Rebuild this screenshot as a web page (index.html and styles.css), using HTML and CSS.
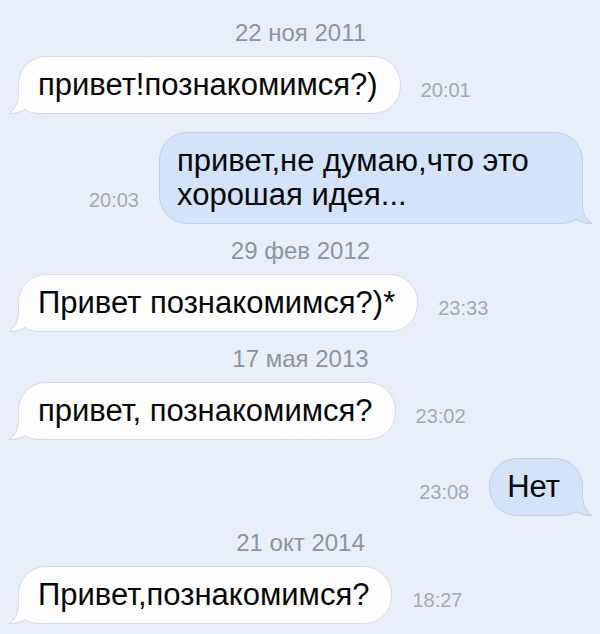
FILE: index.html
```html
<!DOCTYPE html>
<html lang="ru">
<head>
    <meta charset="UTF-8">
    <meta name="viewport" content="width=device-width, initial-scale=1.0">
    <title>Сообщения</title>
    <link rel="stylesheet" href="styles.css">
</head>
<body>
    <main class="chat">
        <div class="date">22 ноя 2011</div>
        <div class="row in">
            <div class="bubble">привет!познакомимся?)
                <svg class="tail" viewBox="0 0 42 30" width="42" height="30"><path class="tail-fill" d="M10 0 L10.5 10 C10.5 20 6 26 1 29.5 C7 30 13 28 17 25.5 C21 28.5 27 29.5 34 29.5 L42 29.5 L42 0 Z"/><path class="tail-line" d="M10.5 0 L10.5 10 C10.5 20 6 26 1 29.5 C7 30 13 28 17 25.5 C21 28.5 27 29.5 34 29.5 L42 29.5"/></svg>
            </div>
            <span class="time">20:01</span>
        </div>
        <div class="row out">
            <span class="time">20:03</span>
            <div class="bubble">привет,не думаю,что это хорошая идея...
                <svg class="tail" viewBox="0 0 42 30" width="42" height="30"><path class="tail-fill" d="M10 0 L10.5 10 C10.5 20 6 26 1 29.5 C7 30 13 28 17 25.5 C21 28.5 27 29.5 34 29.5 L42 29.5 L42 0 Z"/><path class="tail-line" d="M10.5 0 L10.5 10 C10.5 20 6 26 1 29.5 C7 30 13 28 17 25.5 C21 28.5 27 29.5 34 29.5 L42 29.5"/></svg>
            </div>
        </div>

        <div class="date">29 фев 2012</div>
        <div class="row in">
            <div class="bubble">Привет познакомимся?)*
                <svg class="tail" viewBox="0 0 42 30" width="42" height="30"><path class="tail-fill" d="M10 0 L10.5 10 C10.5 20 6 26 1 29.5 C7 30 13 28 17 25.5 C21 28.5 27 29.5 34 29.5 L42 29.5 L42 0 Z"/><path class="tail-line" d="M10.5 0 L10.5 10 C10.5 20 6 26 1 29.5 C7 30 13 28 17 25.5 C21 28.5 27 29.5 34 29.5 L42 29.5"/></svg>
            </div>
            <span class="time">23:33</span>
        </div>

        <div class="date">17 мая 2013</div>
        <div class="row in">
            <div class="bubble">привет, познакомимся?
                <svg class="tail" viewBox="0 0 42 30" width="42" height="30"><path class="tail-fill" d="M10 0 L10.5 10 C10.5 20 6 26 1 29.5 C7 30 13 28 17 25.5 C21 28.5 27 29.5 34 29.5 L42 29.5 L42 0 Z"/><path class="tail-line" d="M10.5 0 L10.5 10 C10.5 20 6 26 1 29.5 C7 30 13 28 17 25.5 C21 28.5 27 29.5 34 29.5 L42 29.5"/></svg>
            </div>
            <span class="time">23:02</span>
        </div>
        <div class="row out">
            <span class="time">23:08</span>
            <div class="bubble">Нет
                <svg class="tail" viewBox="0 0 42 30" width="42" height="30"><path class="tail-fill" d="M10 0 L10.5 10 C10.5 20 6 26 1 29.5 C7 30 13 28 17 25.5 C21 28.5 27 29.5 34 29.5 L42 29.5 L42 0 Z"/><path class="tail-line" d="M10.5 0 L10.5 10 C10.5 20 6 26 1 29.5 C7 30 13 28 17 25.5 C21 28.5 27 29.5 34 29.5 L42 29.5"/></svg>
            </div>
        </div>

        <div class="date">21 окт 2014</div>
        <div class="row in">
            <div class="bubble">Привет,познакомимся?
                <svg class="tail" viewBox="0 0 42 30" width="42" height="30"><path class="tail-fill" d="M10 0 L10.5 10 C10.5 20 6 26 1 29.5 C7 30 13 28 17 25.5 C21 28.5 27 29.5 34 29.5 L42 29.5 L42 0 Z"/><path class="tail-line" d="M10.5 0 L10.5 10 C10.5 20 6 26 1 29.5 C7 30 13 28 17 25.5 C21 28.5 27 29.5 34 29.5 L42 29.5"/></svg>
            </div>
            <span class="time">18:27</span>
        </div>
    </main>
</body>
</html>
```

FILE: styles.css
```css
body {
    margin: 0;
    background: #e9eff8;
    font-family: "Liberation Sans", Arial, sans-serif;
    color: #080808;
    overflow: hidden;
}
.chat {
    padding: 21px 17px 0 18px;
    display: flex;
    flex-direction: column;
}
.date {
    text-align: center;
    font-size: 24px;
    line-height: 24px;
    color: #8f949c;
    margin: 15px 0 11px;
}
.date:first-child {
    margin-top: 0;
}
.row {
    display: flex;
    align-items: flex-end;
    gap: 20px;
}
.row + .row {
    margin-top: 18px;
}
.row.out {
    justify-content: flex-end;
}
.time {
    font-size: 20px;
    line-height: 20px;
    color: #a6aab1;
    margin-bottom: 14px;
}
.bubble {
    position: relative;
    z-index: 0;
    max-width: 424px;
    box-sizing: border-box;
    font-size: 31px;
    line-height: 34px;
    padding: 11px 22px 11px 19px;
    border-radius: 28px;
    border: 1px solid #d6dae2;
    background: #fdfdfe;
}
.out .bubble {
    padding: 11px 22px 11px 17px;
    background: #d4e3fa;
    border-color: #c2d0e6;
}
.tail {
    position: absolute;
    z-index: -1;
    left: -11px;
    bottom: -1px;
    overflow: visible;
}
.out .tail {
    left: auto;
    right: -11px;
    transform: scaleX(-1);
}
.tail-fill {
    fill: #fdfdfe;
}
.tail-line {
    fill: none;
    stroke: #d6dae2;
    stroke-width: 1;
}
.out .tail-fill {
    fill: #d4e3fa;
}
.out .tail-line {
    stroke: #c2d0e6;
}
```
